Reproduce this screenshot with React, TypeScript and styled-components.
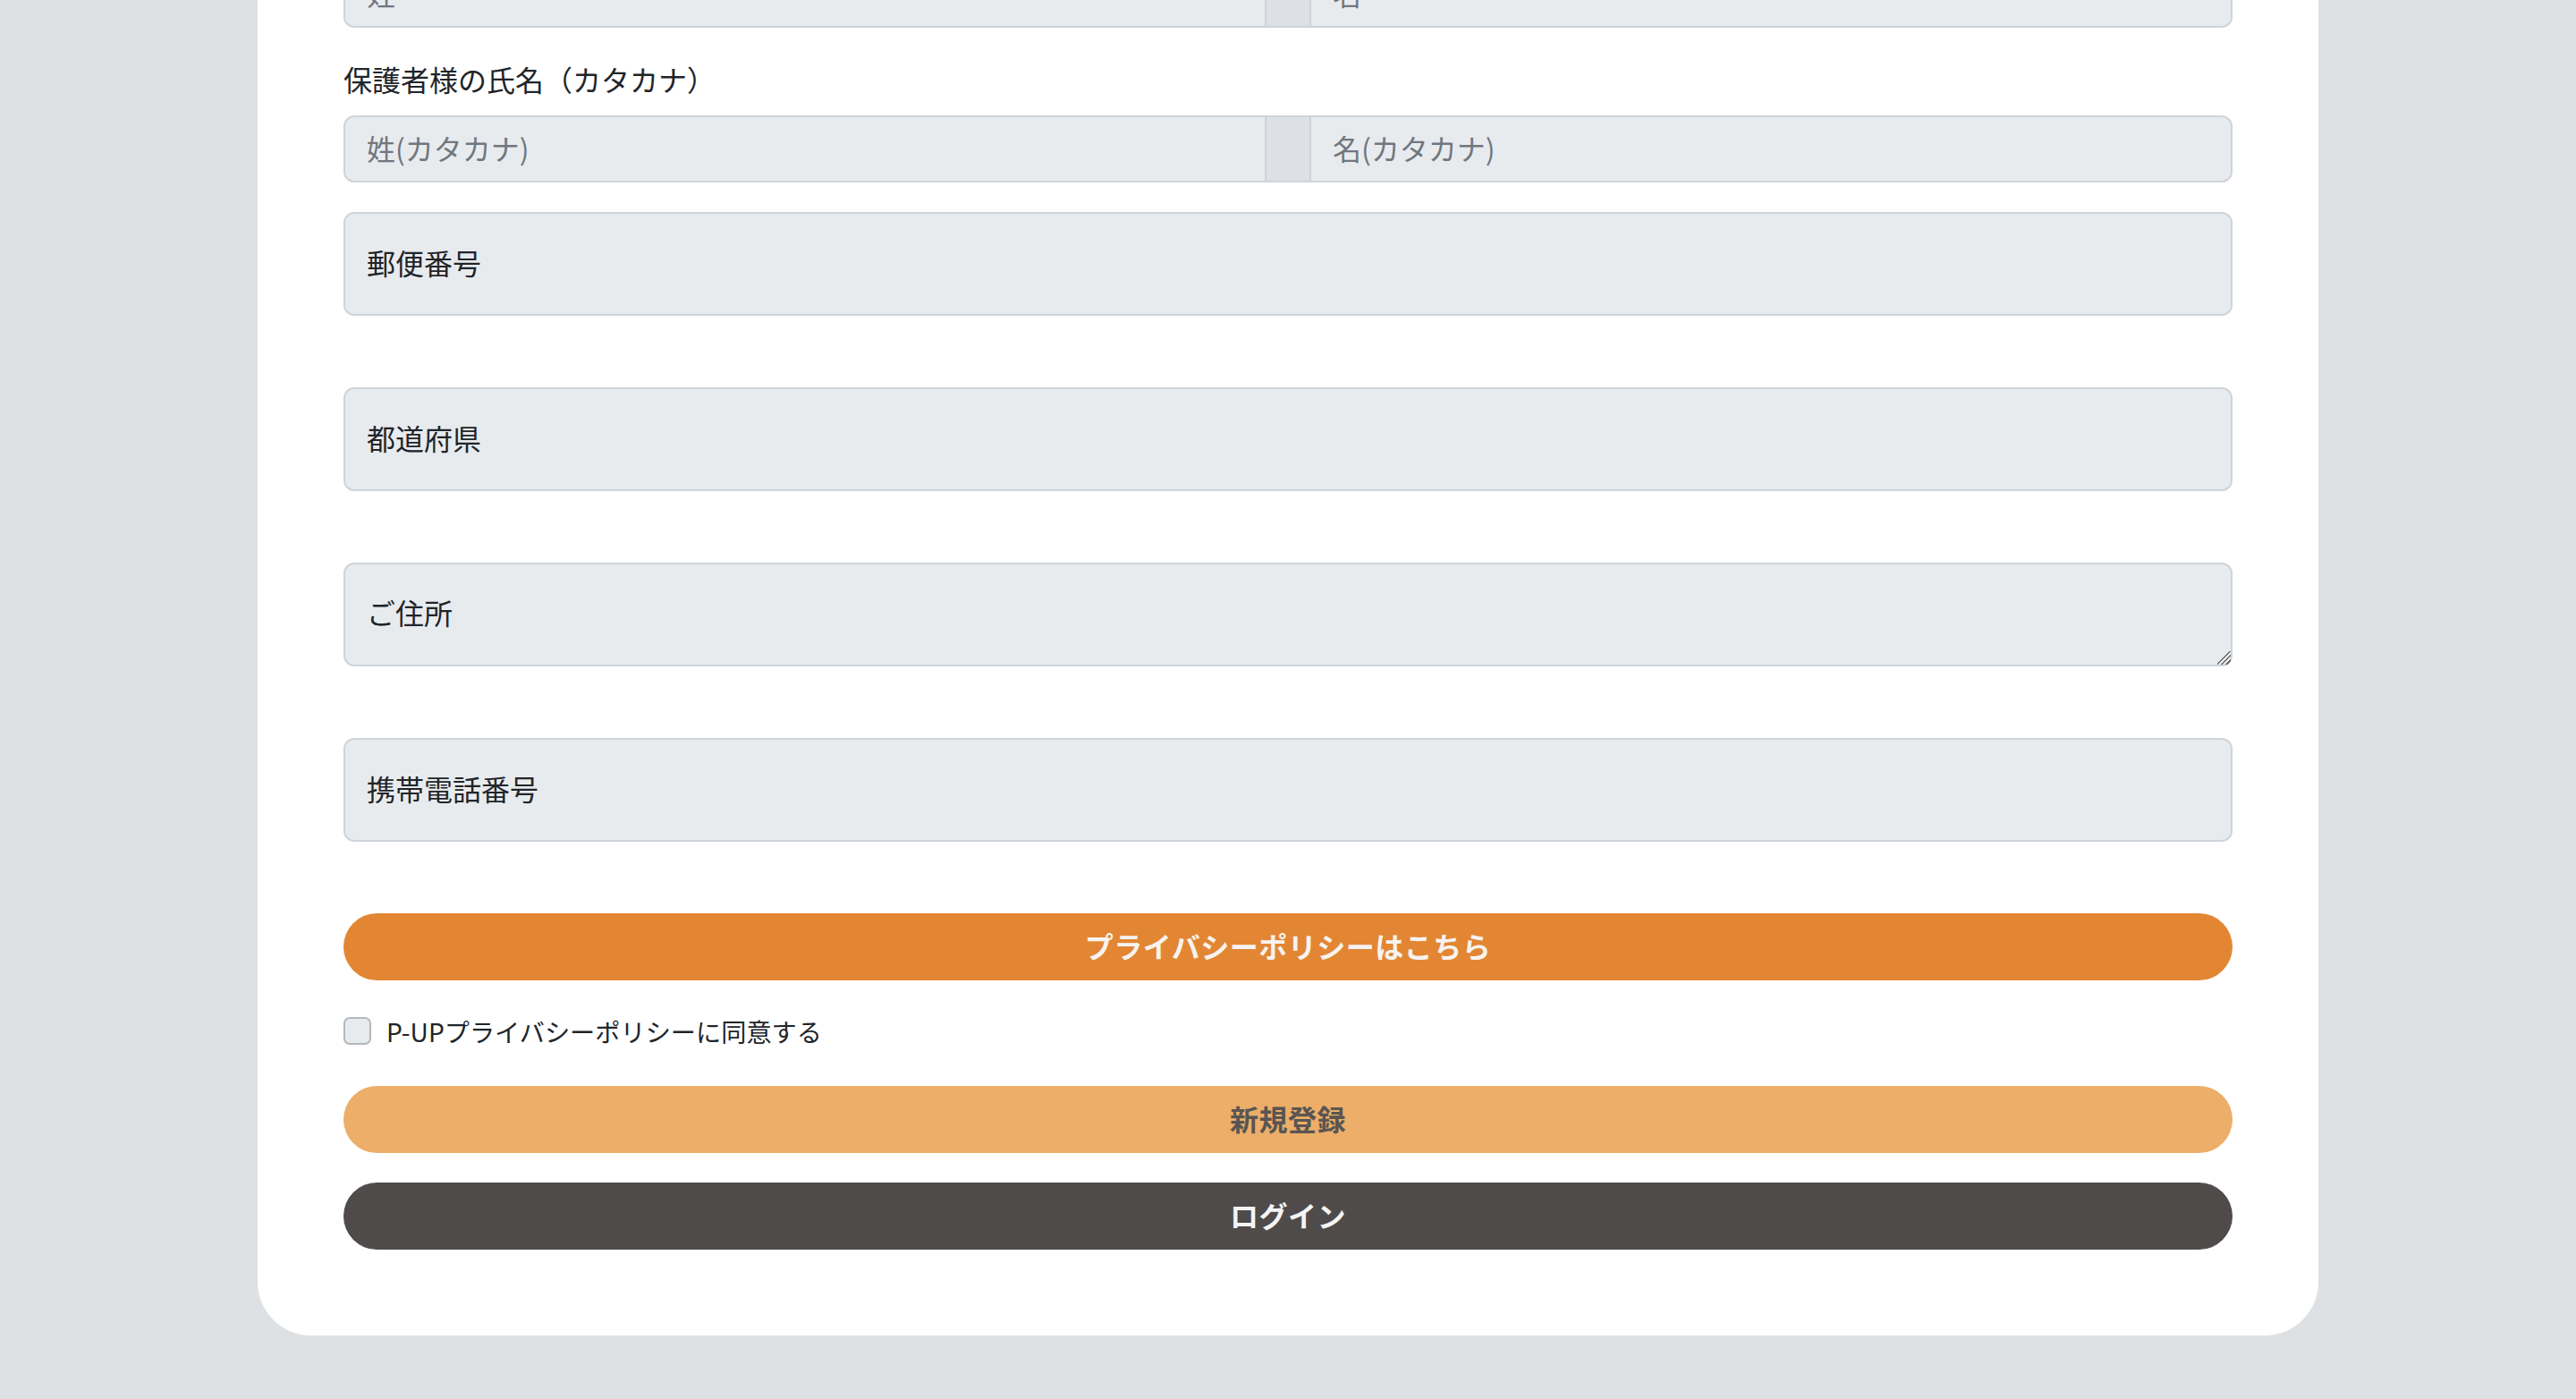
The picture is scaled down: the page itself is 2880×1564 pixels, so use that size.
import React from "react";
import styled, { createGlobalStyle, css } from "styled-components";

const GlobalStyle = createGlobalStyle`
  html, body { margin: 0; padding: 0; background: #dee1e4; }
  body { font-family: "Noto Sans CJK JP", "Noto Sans", sans-serif; color: #212529; }
  * { box-sizing: border-box; }
`;

const Page = styled.div`
  height: 1564px;
  overflow: hidden;
  background: #dee1e4;
  display: flex;
  justify-content: center;
  align-items: flex-start;
`;

const Card = styled.form`
  width: 2304px;
  margin-top: -140px;
  background: #ffffff;
  border-radius: 60px;
  padding: 96px;
  display: flex;
  flex-direction: column;
`;

const FieldLabel = styled.label`
  font-size: 32px;
  line-height: 48px;
  color: #212529;
  margin-bottom: 17px;
`;

const InputGroup = styled.div<{ $mb: number }>`
  display: flex;
  height: 75px;
  margin-bottom: ${(p) => p.$mb}px;
`;

const GroupInput = styled.input<{ $side: "left" | "right" }>`
  flex: 1;
  min-width: 0;
  height: 100%;
  border: 2px solid #ced4da;
  background: #e8ebee;
  font-family: inherit;
  font-size: 32px;
  color: #212529;
  padding: 0 24px 3px;
  outline: none;
  ${(p) =>
    p.$side === "left"
      ? css`border-radius: 12px 0 0 12px;`
      : css`border-radius: 0 12px 12px 0; margin-left: -2px;`}
  &::placeholder { color: #70777e; }
`;

const Addon = styled.span`
  width: 52px;
  height: 100%;
  margin-left: -2px;
  background: #dde0e4;
  border: 2px solid #ced4da;
`;

const FloatInput = styled.input<{ $mb: number }>`
  height: 116px;
  width: 100%;
  border: 2px solid #ced4da;
  border-radius: 12px;
  background: #e8ebee;
  font-family: inherit;
  font-size: 32px;
  color: #212529;
  padding: 0 24px 4px;
  outline: none;
  margin-bottom: ${(p) => p.$mb}px;
  &::placeholder { color: #212529; }
`;

const FloatTextarea = styled.textarea<{ $mb: number }>`
  display: block;
  height: 116px;
  width: 100%;
  border: 2px solid #ced4da;
  border-radius: 12px;
  background: #e8ebee;
  font-family: inherit;
  font-size: 32px;
  line-height: 48px;
  color: #212529;
  padding: 29px 24px 0;
  outline: none;
  resize: vertical;
  overflow: auto;
  margin: 0 0 ${(p) => p.$mb}px;
  &::placeholder { color: #212529; }
  &::-webkit-scrollbar {
    width: 24px;
    height: 24px;
    background: transparent;
  }
  &::-webkit-resizer {
    background: linear-gradient(
      135deg,
      transparent 0 44%,
      #707070 44% 51%,
      transparent 51% 62%,
      #707070 62% 69%,
      transparent 69% 80%,
      #707070 80% 87%,
      transparent 87%
    );
  }
`;

const PillButton = styled.button<{ $variant: "primary" | "muted" | "dark"; $mb: number }>`
  height: 75px;
  width: 100%;
  border: none;
  border-radius: 40px;
  font-family: inherit;
  font-size: 32px;
  font-weight: 700;
  letter-spacing: 0.5px;
  padding: 0 0 4px;
  cursor: pointer;
  margin-bottom: ${(p) => p.$mb}px;
  ${(p) =>
    p.$variant === "primary"
      ? css`background: #e38633; color: #f6f3f0;`
      : p.$variant === "muted"
      ? css`background: #ecae68; color: #5a5552;`
      : css`background: #4f4b4a; color: #f4f4f4;`}
`;

const CheckRow = styled.label`
  display: flex;
  align-items: center;
  gap: 17px;
  height: 48px;
  margin: 32px 0 38px;
  font-size: 28.2px;
  color: #212529;
  cursor: pointer;
`;

const CheckBox = styled.input`
  appearance: none;
  margin: 0;
  width: 31px;
  height: 31px;
  border: 2px solid #b3b8bd;
  border-radius: 7px;
  background: #e8ebee;
`;

export default function App() {
  return (
    <>
      <GlobalStyle />
      <Page>
        <Card onSubmit={(e) => e.preventDefault()}>
          <InputGroup $mb={33}>
            <GroupInput $side="left" placeholder="姓" />
            <Addon />
            <GroupInput $side="right" placeholder="名" />
          </InputGroup>

          <FieldLabel>保護者様の氏名（カタカナ）</FieldLabel>
          <InputGroup $mb={33}>
            <GroupInput $side="left" placeholder="姓(カタカナ)" />
            <Addon />
            <GroupInput $side="right" placeholder="名(カタカナ)" />
          </InputGroup>

          <FloatInput $mb={80} placeholder="郵便番号" />
          <FloatInput $mb={80} placeholder="都道府県" />
          <FloatTextarea $mb={80} placeholder="ご住所" />
          <FloatInput $mb={80} placeholder="携帯電話番号" />

          <PillButton type="button" $variant="primary" $mb={0}>
            プライバシーポリシーはこちら
          </PillButton>

          <CheckRow>
            <CheckBox type="checkbox" />
            P-UPプライバシーポリシーに同意する
          </CheckRow>

          <PillButton type="submit" $variant="muted" $mb={33}>
            新規登録
          </PillButton>
          <PillButton type="button" $variant="dark" $mb={0}>
            ログイン
          </PillButton>
        </Card>
      </Page>
    </>
  );
}
